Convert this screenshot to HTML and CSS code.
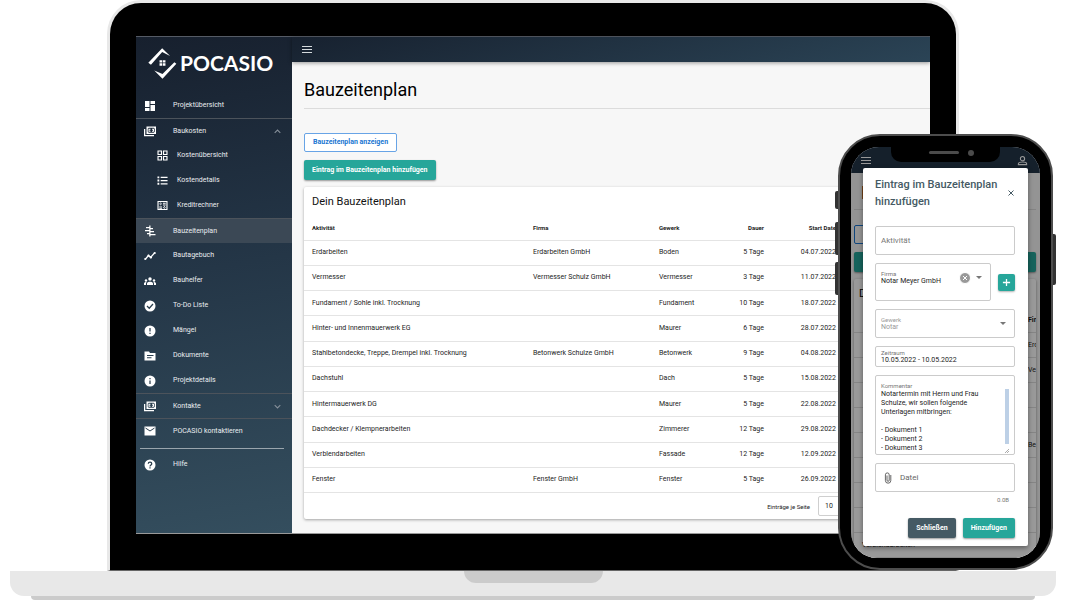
FILE: index.html
```html
<!DOCTYPE html>
<html lang="de">
<head>
<meta charset="utf-8">
<title>POCASIO – Bauzeitenplan</title>
<link rel="stylesheet" href="styles.css">
</head>
<body>
<div class="laptop">
  <div class="lid">
    <div class="screen">
      <aside class="sidebar">
        <div class="logo">
          <svg class="logo-mark" viewBox="144 143 86 94"><g fill="#fff"><path d="M144 188L186 143.500L210 167L186 155L152 194Z"/><path d="M229 191L187 236.500L162 211L187 222L223 186Z"/><path d="M178 180h8v7h-8zM188 180h8v7h-8zM178 189h8v8h-8zM188 189h8v8h-8z"/></g></svg>
          <span>POCASIO</span>
        </div>
        <nav>
          <a class="item" href="#"><svg viewBox="0 0 24 24"><path d="M2 2h9v12H2zM2 16h9v6H2zM13 2h9v6h-9zM13 10h9v12h-9z"/></svg>Projektübersicht</a>
          <a class="item ruled" href="#"><svg viewBox="0 0 24 24"><path fill-rule="evenodd" d="M5 3h19v15H5zM7.500 7.500v6l2 2h10l2-2v-6l-2-2h-10zM0 8h2.500v12H20v2.500H0z"/><path d="M9 7.500h4v2h-2v2h2v2H9zM20 7.500h-4v2h2v2h-2v2h4z"/></svg>Baukosten<svg class="chevron" viewBox="0 0 10 10"><path d="M1 7l4-4 4 4"/></svg></a>
          <a class="item sub" href="#"><svg viewBox="0 0 24 24"><path fill-rule="evenodd" d="M1 1h10v10H1zM3.500 3.500v5h5v-5zM13 1h10v10H13zM15.500 3.500v5h5v-5zM1 13h10v10H1zM3.500 15.500v5h5v-5zM13 13h10v10H13zM15.500 15.500v5h5v-5z"/></svg>Kostenübersicht</a>
          <a class="item sub" href="#"><svg viewBox="0 0 24 24"><path d="M1 3h4v4H1zM1 10h4v4H1zM1 17h4v4H1zM8 4h15v2.500H8zM8 11h15v2.500H8zM8 18h15v2.500H8z"/></svg>Kostendetails</a>
          <a class="item sub" href="#"><svg viewBox="0 0 24 24"><path fill-rule="evenodd" d="M1 2h22v20H1zM3.500 4.500v15h17v-15zM5 7.500h6v2H5zM13 6h6v2h-6zM13 10h6v2h-6zM7 5.500h2v6H7zM5 14h6v2H5zM5 17h6v2H5zM13 15h6v2h-6zM15 13h2v6h-2z"/></svg>Kreditrechner</a>
          <a class="item ruled active" href="#"><svg viewBox="0 0 24 24"><path d="M10.500 1h2.500v22h-2.500zM4 4h7v2.500H4zM2 10h9v2.500H2zM6 16h5v2.500H6zM12 6h6v2.500h-6zM12 12h8v2.500h-8zM12 18h11v2.500H12z"/></svg>Bauzeitenplan</a>
          <a class="item" href="#"><svg viewBox="0 0 24 24"><path d="M3 18l6-7 4 4 8-9" fill="none" stroke="#fff" stroke-width="2.500"/><circle cx="2.500" cy="18" r="2.200"/><circle cx="9" cy="11" r="2.200"/><circle cx="14" cy="15" r="2.200"/><circle cx="21.500" cy="6" r="2.200"/></svg>Bautagebuch</a>
          <a class="item" href="#"><svg viewBox="0 0 24 24"><circle cx="12" cy="8" r="3.500"/><circle cx="4" cy="11" r="2.400"/><circle cx="20" cy="11" r="2.400"/><path d="M6 20v-3c0-5 12-5 12 0v3zM0 20v-3c0-2 2-3 5-3-1 2-1 3-1 6zM24 20v-3c0-2-2-3-5-3 1 2 1 3 1 6z"/></svg>Bauhelfer</a>
          <a class="item" href="#"><svg viewBox="0 0 24 24"><circle cx="12" cy="12" r="11"/><path class="cut" d="M6 12l4.500 4.500L18 8"/></svg>To-Do Liste</a>
          <a class="item" href="#"><svg viewBox="0 0 24 24"><circle cx="12" cy="12" r="11"/><path class="cut" d="M12 6v7M12 15.500v2.500"/></svg>Mängel</a>
          <a class="item" href="#"><svg viewBox="0 0 24 24"><path fill-rule="evenodd" d="M1 3h9l2 3h11v15H1zM6 10v2h13v-2zM6 14.500v2h9v-2z"/></svg>Dokumente</a>
          <a class="item" href="#"><svg viewBox="0 0 24 24"><circle cx="12" cy="12" r="11"/><path class="cut" d="M12 6v2.500M12 11v7"/></svg>Projektdetails</a>
          <a class="item ruled" href="#"><svg viewBox="0 0 24 24"><path fill-rule="evenodd" d="M5 3h19v15H5zM7.500 7.500v6l2 2h10l2-2v-6l-2-2h-10zM0 8h2.500v12H20v2.500H0z"/><path d="M9 7.500h4v2h-2v2h2v2H9zM20 7.500h-4v2h2v2h-2v2h4z"/></svg>Kontakte<svg class="chevron" viewBox="0 0 10 10"><path d="M1 3l4 4 4-4"/></svg></a>
          <a class="item ruled" href="#"><svg viewBox="0 0 24 24"><path d="M1 3h22v18H1z"/><path class="cut thin" d="M3 6l9 6 9-6"/></svg>POCASIO kontaktieren</a>
          <a class="item help" href="#"><svg viewBox="0 0 24 24"><circle cx="12" cy="12" r="11"/><path class="cut" d="M8.500 9.500c0-4.500 7-4.500 7 0 0 2.500-3.500 2.500-3.500 5.500M12 16.500v2.500"/></svg>Hilfe</a>
        </nav>
      </aside>
      <div class="main">
        <header class="topbar"><button class="burger" aria-label="Menü"><i></i><i></i><i></i></button></header>
        <main class="page">
          <h1>Bauzeitenplan</h1>
          <div class="actions">
            <button class="btn outline">Bauzeitenplan anzeigen</button>
            <button class="btn green">Eintrag im Bauzeitenplan hinzufügen</button>
          </div>
          <section class="card">
            <h2>Dein Bauzeitenplan</h2>
            <table class="plan">
              <colgroup><col><col class="c-firma"><col class="c-gewerk"><col class="c-dauer"><col class="c-start"><col class="c-rest"></colgroup>
              <thead><tr><th>Aktivität</th><th>Firma</th><th>Gewerk</th><th class="num">Dauer</th><th class="num">Start Date</th><th></th></tr></thead>
              <tbody>
                <tr><td>Erdarbeiten</td><td>Erdarbeiten GmbH</td><td>Boden</td><td class="num">5 Tage</td><td class="num">04.07.2022</td><td></td></tr>
                <tr><td>Vermesser</td><td>Vermesser Schulz GmbH</td><td>Vermesser</td><td class="num">3 Tage</td><td class="num">11.07.2022</td><td></td></tr>
                <tr><td>Fundament / Sohle inkl. Trocknung</td><td></td><td>Fundament</td><td class="num">10 Tage</td><td class="num">18.07.2022</td><td></td></tr>
                <tr><td>Hinter- und Innenmauerwerk EG</td><td></td><td>Maurer</td><td class="num">6 Tage</td><td class="num">28.07.2022</td><td></td></tr>
                <tr><td>Stahlbetondecke, Treppe, Drempel inkl. Trocknung</td><td>Betonwerk Schulze GmbH</td><td>Betonwerk</td><td class="num">9 Tage</td><td class="num">04.08.2022</td><td></td></tr>
                <tr><td>Dachstuhl</td><td></td><td>Dach</td><td class="num">5 Tage</td><td class="num">15.08.2022</td><td></td></tr>
                <tr><td>Hintermauerwerk DG</td><td></td><td>Maurer</td><td class="num">5 Tage</td><td class="num">22.08.2022</td><td></td></tr>
                <tr><td>Dachdecker / Klempnerarbeiten</td><td></td><td>Zimmerer</td><td class="num">12 Tage</td><td class="num">29.08.2022</td><td></td></tr>
                <tr><td>Verblendarbeiten</td><td></td><td>Fassade</td><td class="num">12 Tage</td><td class="num">12.09.2022</td><td></td></tr>
                <tr><td>Fenster</td><td>Fenster GmbH</td><td>Fenster</td><td class="num">5 Tage</td><td class="num">26.09.2022</td><td></td></tr>
              </tbody>
            </table>
            <div class="pager"><label for="per-page">Einträge je Seite</label><select id="per-page"><option>10</option></select></div>
          </section>
        </main>
      </div>
    </div>
  </div>
  <div class="base"><div class="notch"></div></div>
  <div class="foot"></div>

  <div class="phone">
    <span class="key k1"></span><span class="key k2"></span><span class="key k3"></span><span class="key k4"></span>
    <div class="display">
      <div class="app">
        <div class="app-bar">
          <span class="burger"><i></i><i></i><i></i></span>
          <svg viewBox="0 0 12 12"><circle cx="6" cy="4" r="2.300"/><path d="M1.500 10.500V9.500C1.500 7 10.500 7 10.500 9.500v1z"/></svg>
        </div>
        <div class="app-body">
          <div class="app-title">B</div>
          <div class="app-outline"></div>
          <div class="app-green"></div>
          <div class="app-card">
            <div class="app-sub">D</div>
            <div class="app-row"><b>Fir</b></div>
            <div class="app-row">Erd</div>
            <div class="app-row">Ve</div>
            <div class="app-row"></div>
            <div class="app-row"></div>
            <div class="app-row">Be</div>
            <div class="app-row"></div>
            <div class="app-row"></div>
            <div class="app-row"></div>
            <div class="app-row first">Verblendarbeiten</div>
          </div>
        </div>
      </div>
      <div class="shade"></div>
      <div class="ear"><span class="speaker"></span><span class="lens"></span></div>
      <form class="dialog">
        <div class="dialog-head">
          <h3>Eintrag im Bauzeitenplan hinzufügen</h3>
          <button type="button" class="close" aria-label="Dialog verlassen"><svg viewBox="0 0 8 8"><path d="M1.500 1.500l5 5M6.500 1.500l-5 5"/></svg></button>
        </div>
        <input class="field tall" type="text" placeholder="Aktivität" aria-label="Aktivität">
        <div class="firm">
          <div class="field firm-box">
            <div class="stack"><label for="firma">Firma</label><input id="firma" type="text" value="Notar Meyer GmbH"></div>
            <svg class="clear" viewBox="0 0 12 12"><circle cx="6" cy="6" r="5.500"/><path d="M4 4l4 4M8 4l-4 4"/></svg>
            <svg class="arrow" viewBox="0 0 6 4"><path d="M0 0h6L3 3z"/></svg>
          </div>
          <button type="button" class="plus" aria-label="Firma anlegen"><svg viewBox="0 0 10 10"><path d="M5 1v8M1 5h8"/></svg></button>
        </div>
        <div class="field tall muted">
          <div class="stack"><label for="gewerk">Gewerk</label><select id="gewerk"><option>Notar</option></select></div>
          <svg class="arrow" viewBox="0 0 6 4"><path d="M0 0h6L3 3z"/></svg>
        </div>
        <div class="field range">
          <div class="stack"><label for="zeit">Zeitraum</label><input id="zeit" type="text" value="10.05.2022 - 10.05.2022"></div>
        </div>
        <div class="field comment">
          <label for="kommentar">Kommentar</label>
          <div class="comment-row">
            <textarea id="kommentar">Notartermin mit Herrn und Frau Schulze, wir sollen folgende Unterlagen mitbringen:

- Dokument 1
- Dokument 2
- Dokument 3</textarea>
            <span class="scroll"></span>
          </div>
          <svg class="grip" viewBox="0 0 4 4"><path d="M0 4L4 0M2 4L4 2"/></svg>
        </div>
        <button type="button" class="field tall file"><svg viewBox="0 0 8 12"><path d="M6.800 3v5.500a2.700 2.700 0 0 1-5.400 0V2.800a1.900 1.900 0 0 1 3.800 0v5.400a1.100 1.100 0 0 1-2.200 0V3.500"/></svg>Datei</button>
        <div class="size">0.0B</div>
        <div class="dialog-actions">
          <button type="button" class="btn dark">Schließen</button>
          <button type="button" class="btn green">Hinzufügen</button>
        </div>
      </form>
    </div>
  </div>
</div>
</body>
</html>
```
FILE: styles.css
```css
* { box-sizing: border-box; }
body { margin: 0; background: #fff; font-family: Roboto, "Liberation Sans", sans-serif; font-size: 7px; line-height: 9px; color: #1d1d1d; overflow: hidden; }
button, input, select, textarea { font: inherit; color: inherit; margin: 0; padding: 0; border: 0; background: none; appearance: none; outline: 0; }
svg { display: block; flex: none; }
h1, h2, h3 { margin: 0; font-weight: 400; }

/* Laptop */
.laptop { position: relative; margin: 0 24px 0 10px; }
.lid { margin: 0 97px; padding: 33px 26px 36px; background: #000; border: 3px solid #e8e8e8; border-bottom: 1px solid #666; border-radius: 34px 34px 0 0; }
.screen { display: flex; border-top: 1px solid #555b65; border-bottom: 1px solid #999; background: #f7f7f7; }
.base { height: 25px; background: #e8e8e8; border-radius: 0 0 14px 14px; }
.notch { width: 139px; height: 12px; margin: 0 auto; background: #cbcbcb; border-radius: 0 0 12px 12px; }
.foot { height: 4px; margin: 0 21px; background: #cbcbcb; border-radius: 0 0 4px 4px; }

/* Sidebar */
.sidebar { flex: none; width: 156px; background: linear-gradient(170deg, #17202e, #223344 40%, #344e5e); color: #fff; }
.logo { display: flex; align-items: center; gap: 3px; height: 56px; padding: 0 0 4px 12px; font: 700 21px/24px Lato, sans-serif; }
.logo-mark { width: 29px; height: 31px; }
.item { display: flex; align-items: center; height: 25px; padding: 0 11px 0 8px; color: #e9edf0; text-decoration: none; }
.item svg { width: 12px; height: 12px; margin-right: 17px; fill: #fff; }
.item.sub { padding-left: 21px; }
.item.sub svg { width: 11px; height: 11px; margin-right: 9px; }
.item.ruled { border-top: 1px solid #4c535b; }
.item.active { background: #3b4855; }
.item .cut { fill: none; stroke: #2a3e4d; stroke-width: 2.500; }
.item .cut.thin { stroke-width: 2; }
.item svg.chevron { width: 7px; height: 7px; margin: 0 0 0 auto; fill: none; stroke: #87909a; stroke-width: 1.500; }
.item.help { position: relative; margin-top: 9px; }
.item.help::before { content: ""; position: absolute; left: 4px; right: 8px; top: -4px; height: 1px; background: #9aa5ad; }

/* Main area */
.main { flex: 1; min-width: 0; }
.topbar { display: flex; align-items: center; height: 25px; padding-left: 10px; background: linear-gradient(165deg, #17212f, #2b4456); box-shadow: 0 1px 4px rgba(0, 0, 0, .4); }
.burger { display: grid; gap: 2px; width: 10px; }
.burger i { height: 1px; background: #d5dadd; }
.page { padding: 15px 0 14px 12px; }
h1 { padding-bottom: 6px; border-bottom: 1px solid #dcdcdc; font-size: 18px; line-height: 25px; color: #000; }
.actions { display: flex; flex-direction: column; align-items: flex-start; gap: 8px; padding: 24px 0 7px; }
.btn { height: 20px; padding: 0 8px; border-radius: 2px; font-weight: 700; color: #fff; box-shadow: 0 1px 2px rgba(0, 0, 0, .4); }
.btn.outline { height: 19px; border: 1px solid #68a4e6; background: #fff; color: #1976d2; box-shadow: none; }
.btn.green { background: #26a69a; }
.btn.dark { background: #455a64; }
.card { background: #fff; border-radius: 2px; box-shadow: 0 1px 3px rgba(0, 0, 0, .35); }
h2 { padding: 8px 8px 6px; font-size: 11px; line-height: 14px; color: #111; }
.plan { width: 100%; height: 278px; table-layout: fixed; border-collapse: collapse; }
.plan th, .plan td { height: 25px; padding: 0 8px; border-bottom: 1px solid #e4e4e4; text-align: left; white-space: nowrap; }
.plan th { font-weight: 700; font-size: 6px; }
.plan .num { text-align: right; }
.c-firma { width: 126px; }
.c-gewerk { width: 66px; }
.c-dauer { width: 55px; }
.c-start { width: 72px; }
.c-rest { width: 86px; }
.pager { display: flex; align-items: center; justify-content: flex-end; gap: 8px; padding: 3px 62px 3px 0; }
.pager label { font-size: 6px; }
.pager select { width: 50px; height: 20px; padding-left: 6px; border: 1px solid #cfcfcf; border-radius: 2px; }

/* Phone */
.phone { position: absolute; top: 134px; right: 3px; width: 215px; padding: 11px 11px 10px; background: #000; border: 2px solid #4d4d4d; border-radius: 42px; }
.key { position: absolute; left: -5px; width: 3px; background: #333; border-radius: 2px 0 0 2px; }
.k1 { top: 55px; height: 18px; }
.k2 { top: 86px; height: 33px; }
.k3 { top: 126px; height: 33px; }
.k4 { top: 98px; left: auto; right: -5px; height: 51px; border-radius: 0 2px 2px 0; }
.display { position: relative; overflow: hidden; padding: 21px 12px 12px; border-radius: 28px 28px 26px 26px; }
.app, .shade { position: absolute; inset: 0; }
.app { background: #f7f7f7; }
.app-bar { display: flex; align-items: center; justify-content: space-between; height: 26px; padding: 0 12px 0 10px; background: #243649; }
.app-bar .burger i { background: #fff; }
.app-bar svg { width: 11px; height: 11px; fill: none; stroke: #fff; stroke-width: 1.200; }
.app-body { padding: 7px 4px 0 3px; }
.app-title { padding: 0 7px 4px; border-bottom: 1px solid #dcdcdc; font-size: 18px; line-height: 25px; color: #000; }
.app-outline { width: 95px; height: 19px; margin-top: 15px; border: 1px solid #1976d2; border-radius: 2px; }
.app-green { height: 20px; margin: 8px 0 7px; background: #26a69a; border-radius: 2px; box-shadow: 0 1px 2px rgba(0, 0, 0, .4); }
.app-card { overflow: hidden; background: #fff; border-radius: 2px; box-shadow: 0 1px 3px rgba(0, 0, 0, .4); }
.app-sub { padding: 8px 5px 7px; font-size: 11px; line-height: 14px; color: #000; }
.app-row { display: flex; align-items: center; height: 25px; padding-left: 174px; border-bottom: 1px solid #dedede; white-space: nowrap; }
.app-row.first { padding-left: 8px; }
.shade { background: rgba(0, 0, 0, .4); }
.ear { position: absolute; top: 0; left: 40px; right: 40px; display: flex; align-items: center; gap: 9px; height: 15px; padding: 0 26px 4px 38px; background: #000; border-radius: 0 0 10px 10px; }
.speaker { flex: 1; height: 3px; background: #4b4b4b; border-radius: 2px; }
.lens { width: 6px; height: 6px; background: #4b4b4b; border-radius: 50%; }

/* Dialog */
.dialog { position: relative; display: flex; flex-direction: column; gap: 8px; padding: 8px 13px 8px 12px; background: #fff; border-radius: 2px; box-shadow: 0 2px 5px rgba(0, 0, 0, .4); }
.dialog-head { display: flex; align-items: center; padding-bottom: 8px; }
h3 { flex: 1; font-size: 11px; line-height: 17px; font-weight: 500; color: #455a64; }
.close { width: 8px; }
.close svg { width: 8px; height: 8px; fill: none; stroke: #455a64; stroke-width: 1; }
.field { display: flex; align-items: center; width: 100%; padding: 0 5px; border: 1px solid #cbcbcb; border-radius: 2px; }
.tall { height: 29px; font-size: 8px; color: #666; }
.tall::placeholder { color: #777; opacity: 1; }
.stack { display: flex; flex-direction: column; flex: 1; min-width: 0; }
.stack input, .stack select { width: 100%; height: 9px; font-size: 7px; line-height: 9px; }
.field label { font-size: 6px; line-height: 7px; color: #777; }
.firm { display: flex; align-items: center; gap: 7px; }
.firm-box { flex: 1; height: 38px; padding-bottom: 8px; }
.clear { width: 12px; height: 12px; margin-right: 5px; fill: #999; stroke: #fff; stroke-width: 1; }
.arrow { width: 6px; height: 4px; margin-right: 3px; fill: #777; }
.plus { display: grid; place-items: center; width: 17px; height: 17px; background: #26a69a; border-radius: 2px; box-shadow: 0 1px 2px rgba(0, 0, 0, .3); }
.plus svg { width: 9px; height: 9px; stroke: #fff; stroke-width: 1.400; }
.muted, .muted label { color: #999; }
.range { height: 21px; }
.comment { position: relative; display: block; height: 80px; padding-top: 6px; }
.comment label { display: block; }
.comment-row { display: flex; height: 65px; }
.comment textarea { flex: 1; min-width: 0; padding: 1px 14px 0 0; overflow: hidden; resize: none; line-height: 9px; }
.scroll { width: 4px; height: 55px; background: #bdd0e6; }
.grip { position: absolute; right: 5px; bottom: 1px; width: 4px; height: 4px; stroke: #888; stroke-width: .700; }
.file { gap: 8px; padding-left: 8px; }
.file svg { width: 8px; height: 12px; fill: none; stroke: #555; stroke-width: .900; }
.size { margin-top: -5px; padding-right: 6px; text-align: right; font-size: 6px; color: #777; }
.dialog-actions { display: flex; justify-content: flex-end; gap: 7px; padding-top: 6px; }
```
